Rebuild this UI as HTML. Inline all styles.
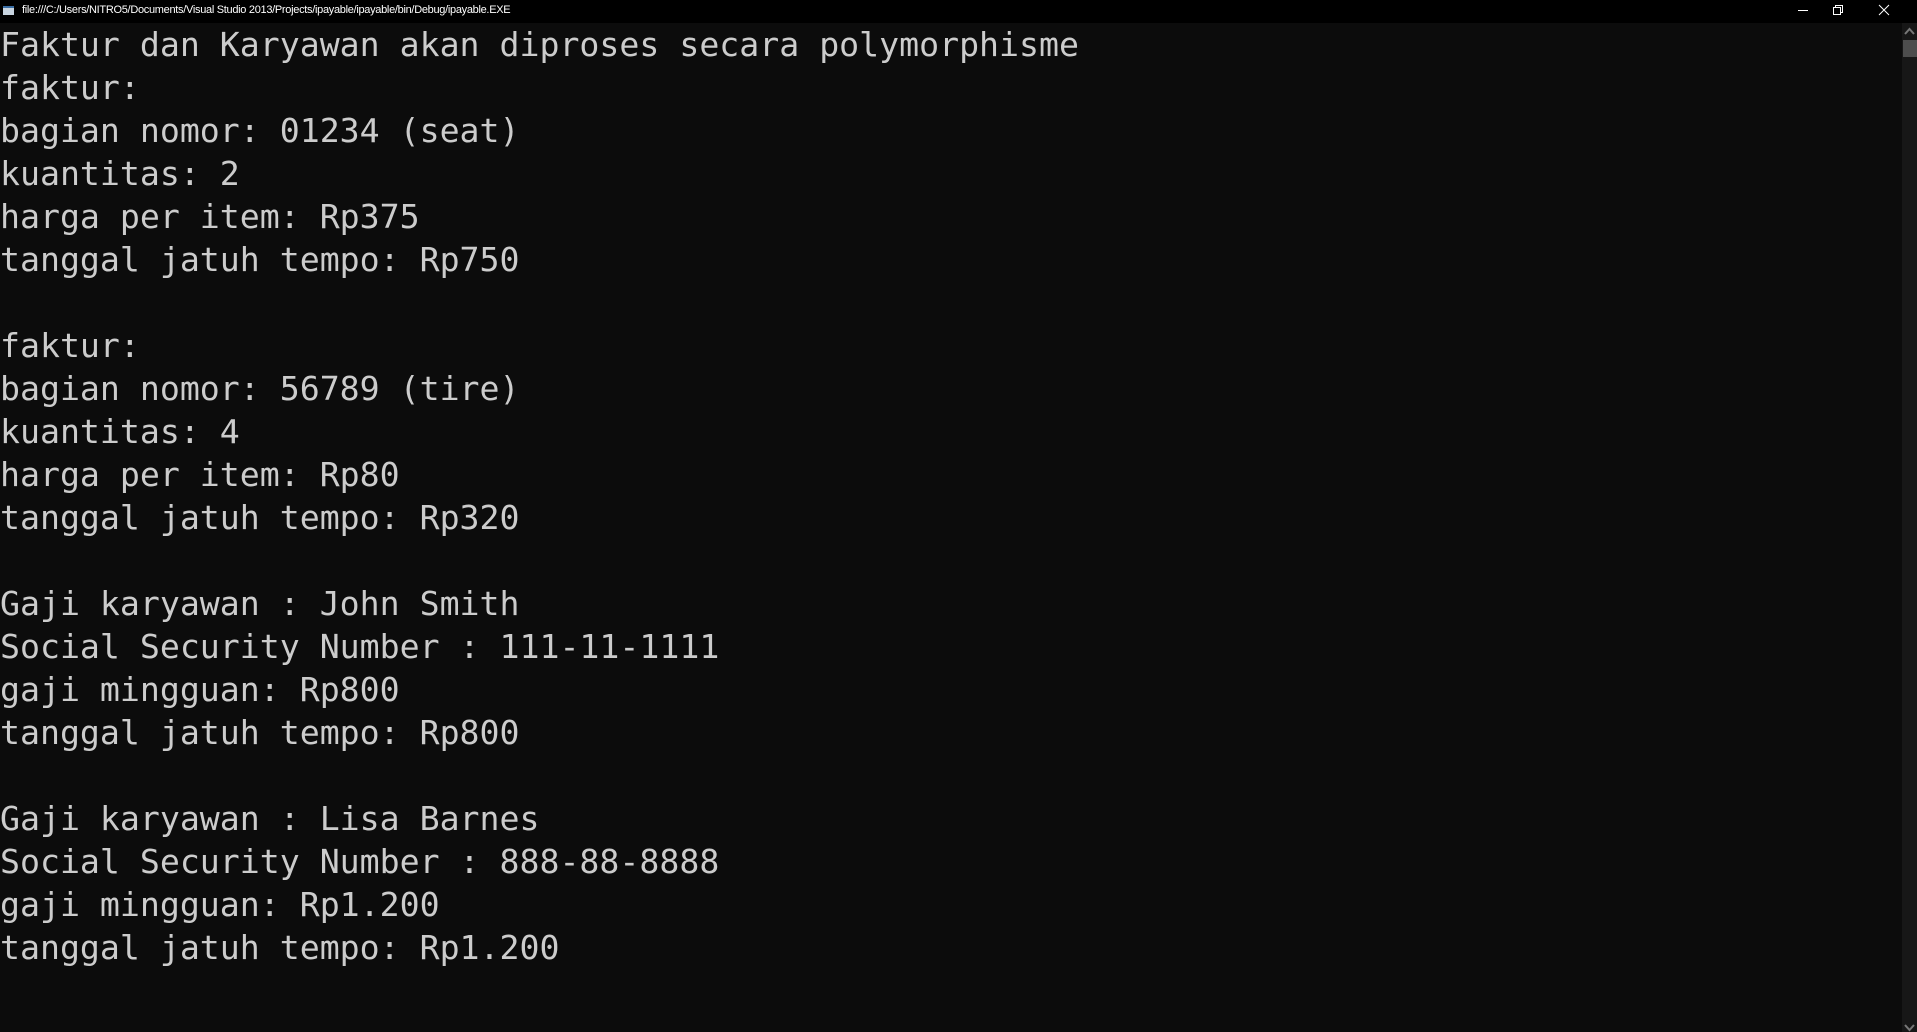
<!DOCTYPE html>
<html><head><meta charset="utf-8"><style>
html,body{margin:0;padding:0;width:1917px;height:1032px;overflow:hidden;background:#0c0c0c;}
#tb{position:absolute;left:0;top:0;width:1917px;height:23px;background:#000;}
#tb .t{position:absolute;left:22px;top:4px;font:11px "Liberation Sans",sans-serif;color:#fff;letter-spacing:-0.3px;}
#tb .ic{position:absolute;left:3px;top:6px;width:11px;height:9px;background:#c8d4e0;border-top:2px solid #3a6ea5;box-sizing:border-box;}
#con{position:absolute;left:0;top:23px;font-family:"DejaVu Sans Mono","Liberation Mono",monospace;font-size:33.2px;line-height:43px;color:#cccccc;white-space:pre;}
#sb{position:absolute;left:1902px;top:23px;width:15px;height:1009px;background:#171717;}
#thumb{position:absolute;left:1903px;top:40px;width:14px;height:17px;background:#4d4d4d;}
</style></head><body>
<div id="tb"><div class="ic"></div><div class="t">file:///C:/Users/NITRO5/Documents/Visual Studio 2013/Projects/ipayable/ipayable/bin/Debug/ipayable.EXE</div>
<svg style="position:absolute;left:1790px;top:0" width="127" height="23">
<line x1="8" y1="10.5" x2="18" y2="10.5" stroke="#fff" stroke-width="1"/>
<rect x="43.5" y="7.5" width="7" height="7" fill="none" stroke="#fff"/>
<path d="M45.5 7.5V5.5H52.5V12.5H50.5" fill="none" stroke="#fff"/>
<path d="M89 5L99 15M99 5L89 15" stroke="#fff" stroke-width="1"/>
</svg></div>
<div id="sb"></div><div id="thumb"></div>
<svg style="position:absolute;left:1902px;top:26px" width="15" height="10"><path d="M3 8L7.5 3L12 8" fill="none" stroke="#777" stroke-width="2"/></svg>
<svg style="position:absolute;left:1902px;top:1022px" width="15" height="10"><path d="M3 3L7.5 8L12 3" fill="none" stroke="#777" stroke-width="2"/></svg>
<div id="con">Faktur dan Karyawan akan diproses secara polymorphisme
faktur:
bagian nomor: 01234 (seat)
kuantitas: 2
harga per item: Rp375
tanggal jatuh tempo: Rp750

faktur:
bagian nomor: 56789 (tire)
kuantitas: 4
harga per item: Rp80
tanggal jatuh tempo: Rp320

Gaji karyawan : John Smith
Social Security Number : 111-11-1111
gaji mingguan: Rp800
tanggal jatuh tempo: Rp800

Gaji karyawan : Lisa Barnes
Social Security Number : 888-88-8888
gaji mingguan: Rp1.200
tanggal jatuh tempo: Rp1.200</div>
</body></html>
